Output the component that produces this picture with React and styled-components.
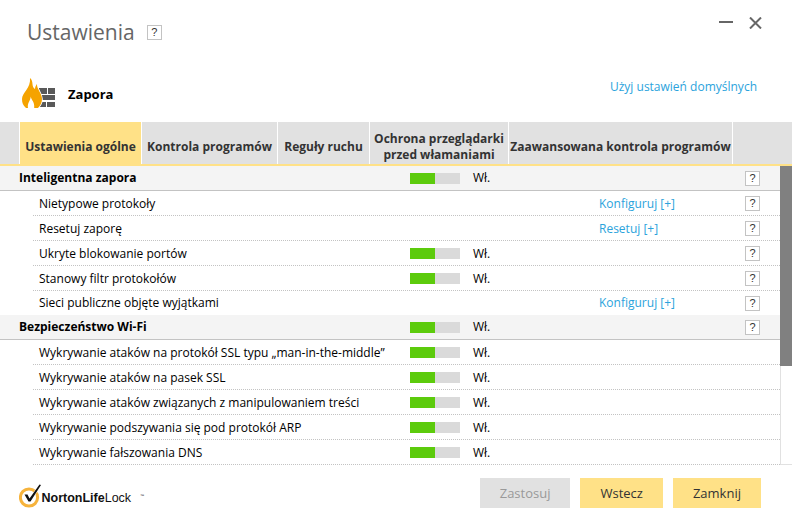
import React, { useState } from "react";
import styled, { createGlobalStyle } from "styled-components";

const color = {
  yellow: "#ffe187",
  grey: "#e1e1e1",
  line: "#c3c3c3",
  link: "#2ba3dc",
  green: "#5ccb0c",
};

const GlobalStyle = createGlobalStyle`
  * { box-sizing: border-box; }
  body {
    margin: 0;
    background: #fff;
    color: #000;
    font: 12px/16px "Open Sans", "Noto Sans", sans-serif;
  }
  button, input { font: inherit; margin: 0; }
`;

const Window = styled.main`
  display: flex;
  flex-direction: column;
`;

const TitleBar = styled.header`
  display: flex;
  align-items: center;
  gap: 12px;
  padding: 16px 30px 0 27px;
`;

const Title = styled.h1`
  margin: 0;
  color: #666;
  font-size: 21px;
  line-height: 32px;
  font-weight: 400;
`;

const HelpButton = styled.button`
  width: 15px;
  height: 15px;
  padding: 0;
  border: 1px solid ${color.line};
  background: #fff;
  color: #333;
  font: 11px/13px "Liberation Sans", sans-serif;
  text-align: center;
`;

const WindowControls = styled.div`
  display: flex;
  align-items: center;
  gap: 16px;
  margin-left: auto;
  padding-bottom: 18px;
`;

const IconButton = styled.button`
  display: flex;
  padding: 0;
  border: 0;
  background: none;
`;

const PageHeader = styled.div`
  display: flex;
  align-items: center;
  gap: 12px;
  padding: 30px 35px 13px 22px;
`;

const PageTitle = styled.h2`
  margin: 0;
  font-size: 13px;
  line-height: 18px;
  font-weight: 700;
`;

const Link = styled.a`
  color: ${color.link};
  text-decoration: none;
`;

const DefaultsLink = styled(Link)`
  margin-left: auto;
  padding-bottom: 14px;
`;

const Tabs = styled.nav`
  display: flex;
  padding-left: 19px;
  border-bottom: 2px solid ${color.yellow};
  background: ${color.grey};
`;

const Tab = styled.button`
  flex: 0 1 ${(p) => p.$width}px;
  height: 42px;
  padding: 8px 0 0;
  border: 0;
  border-left: 1px solid #fff;
  background: ${(p) => (p.$active ? color.yellow : "transparent")};
  color: #333;
  font-weight: 700;
  white-space: pre-line;

  &:last-child { border-right: 1px solid #fff; }
`;

const ScrollPane = styled.div`
  display: grid;
  grid-template-columns: minmax(0, 1fr) 12px;
`;

const ScrollTrack = styled.div`
  border: 1px solid ${color.grey};
  border-width: 0 0 1px 1px;
`;

const ScrollThumb = styled.div`
  height: 200px;
  margin-left: -1px;
  background: #808080;
`;

const Row = styled.div`
  display: grid;
  grid-template-columns: 410fr 189fr 146fr 35px;
  align-items: center;
  height: 25px;
`;

const GroupRow = styled(Row)`
  border-bottom: 1px solid ${color.line};
  background: #f4f4f4;
`;

const GroupTitle = styled.h3`
  margin: 0;
  padding-left: 19px;
  font-size: 12px;
  line-height: 16px;
  font-weight: 700;
`;

const Items = styled.ul`
  margin: 0;
  padding: 0;
  list-style: none;
`;

const Item = styled(Row)`
  position: relative;
  height: ${(p) => (p.$plain ? 24 : 25)}px;

  &::after {
    content: "";
    position: absolute;
    inset: auto 0 0 33px;
    border-bottom: ${(p) => (p.$plain ? "0" : `1px dotted ${color.line}`)};
  }
`;

const ItemName = styled.span`
  padding-left: 39px;
  white-space: nowrap;
`;

const SwitchLabel = styled.label`
  display: flex;
  align-items: center;
  gap: 13px;
`;

const Switch = styled.input`
  appearance: none;
  width: 50px;
  height: 11px;
  background: linear-gradient(
    to right,
    ${color.green} 50%,
    #dadada 50%
  );

  &:not(:checked) {
    background: linear-gradient(to right, #dadada 50%, #999 50%);
  }
`;

const Footer = styled.footer`
  display: flex;
  align-items: center;
  justify-content: space-between;
  padding: 11px 31px 19px 19px;
`;

const Brand = styled.div`
  display: flex;
  padding-top: 7px;
`;

const Actions = styled.div`
  display: flex;
  gap: 10px;
`;

const ActionButton = styled.button`
  height: 30px;
  padding: 0 20px;
  border: 0;
  background: ${color.yellow};
  color: #333;
  font-size: 13px;
  line-height: 30px;

  &:disabled {
    background: ${color.grey};
    color: #999;
  }
`;

function FirewallIcon() {
  return (
    <svg width="34" height="31" viewBox="0 0 34 31" aria-hidden="true">
      <g fill="#595959">
        <path d="M17 10h8v6h-8zM26 10h7v6h-7zM16 17h4v5h-4zM20 17h13v5H20zM17 24h7v5h-7zM25 24h8v5h-8z" />
      </g>
      <path
        d="M8 0C12 3 9 9 13 11c0-2 1-4 2-5-.5 5 5 9 5 15 0 4-2 7-4 9h-4L9 25l-3 5H4c-3-3-4-5-4-9 0-6 9-11 8-21z"
        fill="#f5a300"
        stroke="#fff"
        strokeWidth="1.6"
        paintOrder="stroke"
      />
      <path d="M8.8 18.5c.5 4 4 5 3.4 11.5H6c-1-5 2.500-7 2.800-11.500z" fill="#fff" />
    </svg>
  );
}

function NortonLogo() {
  return (
    <svg width="128" height="26" viewBox="0 0 128 26" role="img" aria-label="NortonLifeLock">
      <circle cx="10" cy="14.500" r="8.600" fill="none" stroke="#f6b33c" strokeWidth="3" />
      <path d="M5.500 11.500h3l2 4L20.500 1.500 22 2 11.500 18.500H9.500z" fill="#111" stroke="#fff" strokeWidth="1" paintOrder="stroke" />
      <g fontFamily="Liberation Sans, Arial, sans-serif" fontSize="12.500" fill="#111">
        <text x="22.500" y="19">
          <tspan fontWeight="700">NortonLife</tspan>
          <tspan>Lock</tspan>
        </text>
        <text x="121" y="14" fontSize="4">™</text>
      </g>
    </svg>
  );
}

const tabs = [
  { label: "Ustawienia ogólne", width: 122 },
  { label: "Kontrola programów", width: 136 },
  { label: "Reguły ruchu", width: 92 },
  { label: "Ochrona przeglądarki\nprzed włamaniami", width: 139 },
  { label: "Zaawansowana kontrola programów", width: 225 },
];

const groups = [
  {
    title: "Inteligentna zapora",
    items: [
      { name: "Nietypowe protokoły", link: "Konfiguruj [+]", help: true },
      { name: "Resetuj zaporę", link: "Resetuj [+]", help: true },
      { name: "Ukryte blokowanie portów", toggle: true, help: true },
      { name: "Stanowy filtr protokołów", toggle: true, help: true },
      { name: "Sieci publiczne objęte wyjątkami", link: "Konfiguruj [+]", help: true, plain: true },
    ],
  },
  {
    title: "Bezpieczeństwo Wi-Fi",
    items: [
      { name: "Wykrywanie ataków na protokół SSL typu „man-in-the-middle”", toggle: true },
      { name: "Wykrywanie ataków na pasek SSL", toggle: true },
      { name: "Wykrywanie ataków związanych z manipulowaniem treści", toggle: true },
      { name: "Wykrywanie podszywania się pod protokół ARP", toggle: true },
      { name: "Wykrywanie fałszowania DNS", toggle: true },
    ],
  },
];

function Toggle({ name }) {
  const [on, setOn] = useState(true);
  return (
    <SwitchLabel>
      <Switch
        type="checkbox"
        role="switch"
        aria-label={name}
        checked={on}
        onChange={() => setOn(!on)}
      />
      {on ? "Wł." : "Wył."}
    </SwitchLabel>
  );
}

function Help() {
  return <HelpButton type="button" aria-label="Pomoc">?</HelpButton>;
}

export default function App() {
  const [active, setActive] = useState(0);
  return (
    <Window>
      <GlobalStyle />
      <TitleBar>
        <Title>Ustawienia</Title>
        <Help />
        <WindowControls>
          <IconButton type="button" aria-label="Minimalizuj">
            <svg width="14" height="12" viewBox="0 0 14 12">
              <path d="M0 5h14" stroke="#666" strokeWidth="2" />
            </svg>
          </IconButton>
          <IconButton type="button" aria-label="Zamknij okno">
            <svg width="13" height="12" viewBox="0 0 13 12">
              <path d="M1 .5l11 11M12 .5l-11 11" stroke="#666" strokeWidth="2" />
            </svg>
          </IconButton>
        </WindowControls>
      </TitleBar>
      <PageHeader>
        <FirewallIcon />
        <PageTitle>Zapora</PageTitle>
        <DefaultsLink href="#defaults">Użyj ustawień domyślnych</DefaultsLink>
      </PageHeader>
      <Tabs>
        {tabs.map((tab, i) => (
          <Tab
            key={tab.label}
            type="button"
            $width={tab.width}
            $active={i === active}
            onClick={() => setActive(i)}
          >
            {tab.label}
          </Tab>
        ))}
      </Tabs>
      <ScrollPane>
        <div>
          {groups.map((group) => (
            <section key={group.title}>
              <GroupRow>
                <GroupTitle>{group.title}</GroupTitle>
                <Toggle name={group.title} />
                <span />
                <Help />
              </GroupRow>
              <Items>
                {group.items.map((item) => (
                  <Item as="li" key={item.name} $plain={item.plain}>
                    <ItemName>{item.name}</ItemName>
                    {item.toggle ? <Toggle name={item.name} /> : <span />}
                    {item.link ? <Link href="#configure">{item.link}</Link> : <span />}
                    {item.help && <Help />}
                  </Item>
                ))}
              </Items>
            </section>
          ))}
        </div>
        <ScrollTrack>
          <ScrollThumb />
        </ScrollTrack>
      </ScrollPane>
      <Footer>
        <Brand>
          <NortonLogo />
        </Brand>
        <Actions>
          <ActionButton type="button" disabled>Zastosuj</ActionButton>
          <ActionButton type="button">Wstecz</ActionButton>
          <ActionButton type="button">Zamknij</ActionButton>
        </Actions>
      </Footer>
    </Window>
  );
}
